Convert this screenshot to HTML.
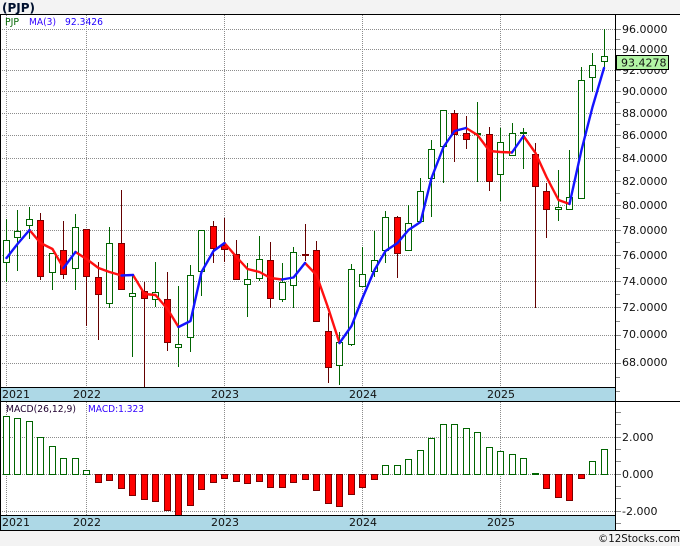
<!DOCTYPE html>
<html><head><meta charset="utf-8"><style>
html,body{margin:0;padding:0;background:#f3f3f3;width:680px;height:546px;overflow:hidden}
svg{display:block}
text{font-family:"DejaVu Sans","Liberation Sans",sans-serif;font-size:11px;fill:#111}
.s{font-size:10px}
</style></head><body>
<svg width="680" height="546" viewBox="0 0 680 546" xmlns="http://www.w3.org/2000/svg">
<rect width="680" height="546" fill="#f3f3f3"/>
<rect x="0" y="14" width="680" height="517" fill="#fff"/>
<rect x="1" y="388" width="614" height="13" fill="#add8e6"/>
<rect x="1" y="516" width="614" height="14" fill="#add8e6"/>
<g stroke="#8c8c8c" stroke-width="1" fill="none" stroke-dasharray="1 1">
<path d="M2 29.5H620M2 49.5H620M2 70.5H620M2 91.5H620M2 113.5H620M2 135.5H620M2 158.5H620M2 181.5H620M2 205.5H620M2 230.5H620M2 255.5H620M2 281.5H620M2 307.5H620M2 335.5H620M2 363.5H620"/>
<path d="M2 437.5H620M2 474.5H620M2 511.5H620"/>
<path d="M6.5 15V387M86.5 15V387M224.5 15V387M362.5 15V387M500.5 15V387"/>
<path d="M6.5 402V515M86.5 402V515M224.5 402V515M362.5 402V515M500.5 402V515"/>
</g>
<path stroke="#888" stroke-width="1" fill="none" d="M616 29.5h5M616 39.5h4M616 49.5h5M616 70.5h5M616 80.5h4M616 91.5h5M616 102.5h4M616 113.5h5M616 124.5h4M616 135.5h5M616 147.5h4M616 158.5h5M616 170.5h4M616 181.5h5M616 193.5h4M616 205.5h5M616 218.5h4M616 230.5h5M616 242.5h4M616 255.5h5M616 268.5h4M616 281.5h5M616 294.5h4M616 307.5h5M616 321.5h4M616 335.5h5M616 349.5h4M616 363.5h5M616 377.5h4M616 391.5h4M616 412.5h5M616 424.5h5M616 437.5h5M616 449.5h5M616 461.5h5M616 474.5h5M616 486.5h5M616 498.5h5M616 511.5h5M616 523.5h5"/>

<!-- wicks -->
<path stroke="#006400" stroke-width="1" fill="none" d="M6.5 219V282M17.5 210V271M29.5 207V239M52.5 253V290M75.5 214V290M109.5 227V308M132.5 275V357M155.5 262V307M178.5 286V367M190.5 265V352M201.5 230V296M247.5 263V317M259.5 236V281M282.5 263V302M293.5 247V308M339.5 332V385M351.5 264V346M362.5 247V286M374.5 231V277M385.5 211V263M408.5 205V250M420.5 178V222M431.5 140V217M443.5 110V183M477.5 102V182M500.5 128V201M512.5 123V155M523.5 128V169M558.5 170V221M569.5 150V209M581.5 67V198M592.5 53V92M604.5 29V67"/>
<path stroke="#640000" stroke-width="1" fill="none" d="M40.5 213V280M63.5 221V279M86.5 229V326M98.5 262V340M121.5 190V289M144.5 282V387M167.5 272V351M213.5 221V263M224.5 218V262M236.5 240V280M270.5 242V308M305.5 224V261M316.5 241V321M328.5 313V383M397.5 216V278M454.5 110V162M466.5 116V149M489.5 127V191M535.5 143V308M546.5 183V238"/>
<!-- green bodies -->
<path stroke="#006400" stroke-width="1" fill="#fff" d="M3.5 240.5h6v22h-6zM14.5 231.500h6v6h-6zM26.5 219.5h6v6h-6zM49.5 253.5h6v19h-6zM72.5 227.5h6v41h-6zM106.5 243.5h6v60h-6zM129.5 293.5h6v3h-6zM152.5 292.5h6v7h-6zM175.5 344.5h6v3h-6zM187.500 275.5h6v62h-6zM198.5 230.5h6v41h-6zM244.5 279.5h6v5h-6zM256.5 259.5h6v19h-6zM279.5 282.5h6v17h-6zM290.5 252.5h6v33h-6zM336.5 342.5h6v23h-6zM348.5 269.5h6v75h-6zM359.5 274.5h6v12h-6zM371.5 260.5h6v11h-6zM382.5 217.5h6v33h-6zM405.5 223.5h6v27h-6zM417.5 191.5h6v30h-6zM428.5 149.5h6v29h-6zM440.5 110.5h6v36h-6zM474.5 133.500h6v1h-6zM497.5 142.5h6v32h-6zM509.5 133.5h6v22h-6zM520.5 132.5h6v1h-6zM555.5 207.5h6v2h-6zM566.5 197.5h6v12h-6zM578.5 80.5h6v118h-6zM589.5 65.5h6v12h-6zM601.5 56.5h6v5h-6z"/>
<!-- red bodies -->
<path stroke="#7a0000" stroke-width="1" fill="#f00" d="M37.500 220.5h6v56h-6zM60.5 250.5h6v24h-6zM83.5 229.5h6v47h-6zM95.5 277.5h6v17h-6zM118.500 243.5h6v46h-6zM141.5 291.5h6v7h-6zM164.5 299.5h6v43h-6zM210.5 226.5h6v22h-6zM221.5 245.5h6v4h-6zM233.5 254.5h6v25h-6zM267.5 260.5h6v38h-6zM302.5 254.5h6v1h-6zM313.5 250.5h6v71h-6zM325.5 331.5h6v36h-6zM394.5 217.5h6v36h-6zM451.5 113.5h6v21h-6zM463.5 133.5h6v6h-6zM486.5 134.5h6v47h-6zM532.5 154.5h6v32h-6zM543.500 191.5h6v18h-6z"/>
<!-- moving average -->
<g fill="none" stroke-width="2.4" stroke-linejoin="round" stroke-linecap="round">
<path stroke="#ff1010" d="M29.5 230L40.500 243L52.500 249L63.500 268M75.500 252L86.500 259L98.500 268L109.500 272L121.500 275.500M133 275L144.500 294L155.500 295L167.500 309L178.500 327M224.500 243L236.500 257L247.500 269L259.500 272L270.500 278L282 279.500M305 263L316.500 275L328.500 309L339.500 343M466 128L477.500 135L489.500 151L500.500 152L512 152.500M523.500 136L535.500 153L546.500 177L558.500 200L569.500 204"/>
<path stroke="#1414ff" d="M6.500 258L17.500 244L29.500 230M63.500 268L75.500 252M121.500 275.500L133 275M178.500 327L190.500 321L201.500 272L213.500 251L224.500 243M282 279.500L293.500 277.500L305 263M339.500 343L351.500 326L362.500 298L374.500 270L385.500 251L397.500 243L408.500 230L420.500 222L431.500 178L443.500 147L454.500 131L466 128M512 152.500L523.500 136M569.500 204L581.500 150L592.500 107L604 68"/>
</g>
<!-- MACD bars -->
<path stroke="#006400" stroke-width="1" fill="#fff" d="M3.500 416.500h6V474.500h-6zM14.500 418.500h6V474.500h-6zM26.500 421.500h6V474.500h-6zM37.500 437.500h6V474.500h-6zM49.500 446.500h6V474.500h-6zM60.500 458.500h6V474.500h-6zM72.500 458.500h6V474.500h-6zM83.500 470.500h6V474.500h-6zM382.500 465.500h6V474.500h-6zM394.500 465.500h6V474.500h-6zM405.500 459.500h6V474.500h-6zM417.500 450.500h6V474.500h-6zM428.500 438.500h6V474.500h-6zM440.500 424.500h6V474.500h-6zM451.500 424.500h6V474.500h-6zM463.500 428.500h6V474.500h-6zM474.500 432.500h6V474.500h-6zM486.500 447.500h6V474.500h-6zM497.500 451.500h6V474.500h-6zM509.500 454.500h6V474.500h-6zM520.500 458.500h6V474.500h-6zM532.500 473.500h6V474.500h-6zM589.500 461.500h6V474.500h-6zM601.500 449.500h6V474.500h-6z"/>
<path stroke="#7a0000" stroke-width="1" fill="#f00" d="M95.500 474.500h6V482.500h-6zM106.500 474.500h6V480.500h-6zM118.500 474.500h6V488.500h-6zM129.500 474.500h6V495.500h-6zM141.500 474.500h6V499.500h-6zM152.500 474.500h6V501.500h-6zM164.500 474.500h6V510.500h-6zM175.500 474.500h6V515.500h-6zM187.500 474.500h6V505.500h-6zM198.500 474.500h6V489.500h-6zM210.500 474.500h6V482.500h-6zM221.500 474.500h6V478.500h-6zM233.500 474.500h6V481.500h-6zM244.500 474.500h6V483.500h-6zM256.500 474.500h6V481.500h-6zM267.500 474.500h6V487.500h-6zM279.500 474.500h6V487.500h-6zM290.500 474.500h6V482.500h-6zM302.500 474.500h6V479.500h-6zM313.500 474.500h6V490.500h-6zM325.500 474.500h6V503.500h-6zM336.500 474.500h6V506.500h-6zM348.500 474.500h6V494.500h-6zM359.500 474.500h6V487.500h-6zM371.500 474.500h6V479.500h-6zM543.500 474.500h6V488.500h-6zM555.500 474.500h6V497.500h-6zM566.500 474.500h6V500.500h-6zM578.500 474.500h6V478.500h-6z"/>
<!-- frame -->
<path stroke="#000" stroke-width="1" fill="none" d="M0 14.500H680M0.500 14V531M615.500 14V531M0 387.500H616M0 401.500H680M0 515.500H616M0 530.500H680"/>
<!-- title -->
<text x="2" y="12" textLength="33" lengthAdjust="spacingAndGlyphs" style="font-size:12px;font-weight:bold;fill:#00102e">(PJP)</text>
<!-- legends -->
<text class="s" x="5" y="25" textLength="14" lengthAdjust="spacingAndGlyphs" style="fill:#006400">PJP</text>
<text class="s" x="29" y="25" textLength="27" lengthAdjust="spacingAndGlyphs" style="fill:#3000ff">MA(3)</text>
<text class="s" x="65" y="25" textLength="38" lengthAdjust="spacingAndGlyphs" style="fill:#2000ff">92.3426</text>
<text class="s" x="6" y="412" textLength="70" lengthAdjust="spacingAndGlyphs" style="fill:#200030">MACD(26,12,9)</text>
<text class="s" x="88" y="412" textLength="56" lengthAdjust="spacingAndGlyphs" style="fill:#3000ff">MACD:1.323</text>
<!-- axis -->
<text x="622" y="33">96.0000</text>
<text x="622" y="53">94.0000</text>
<text x="622" y="74">92.0000</text>
<text x="622" y="95">90.0000</text>
<text x="622" y="117">88.0000</text>
<text x="622" y="139">86.0000</text>
<text x="622" y="162">84.0000</text>
<text x="622" y="185">82.0000</text>
<text x="622" y="209">80.0000</text>
<text x="622" y="234">78.0000</text>
<text x="622" y="259">76.0000</text>
<text x="622" y="285">74.0000</text>
<text x="622" y="311">72.0000</text>
<text x="622" y="338">70.0000</text>
<text x="622" y="366">68.0000</text>
<text x="622" y="441">2.000</text>
<text x="622" y="478">0.000</text>
<text x="622" y="515">-2.000</text>
<rect x="616.500" y="55.500" width="52" height="14" fill="#b2f5a5" stroke="#000"/>
<text x="621" y="66.500">93.4278</text>
<!-- years -->
<text x="2" y="398">2021</text><text x="73" y="398">2022</text><text x="211" y="398">2023</text><text x="349" y="398">2024</text><text x="487" y="398">2025</text>
<text x="2" y="526">2021</text><text x="73" y="526">2022</text><text x="211" y="526">2023</text><text x="349" y="526">2024</text><text x="487" y="526">2025</text>
<text x="598" y="542" textLength="82" lengthAdjust="spacingAndGlyphs">©12Stocks.com</text>
</svg>
</body></html>
